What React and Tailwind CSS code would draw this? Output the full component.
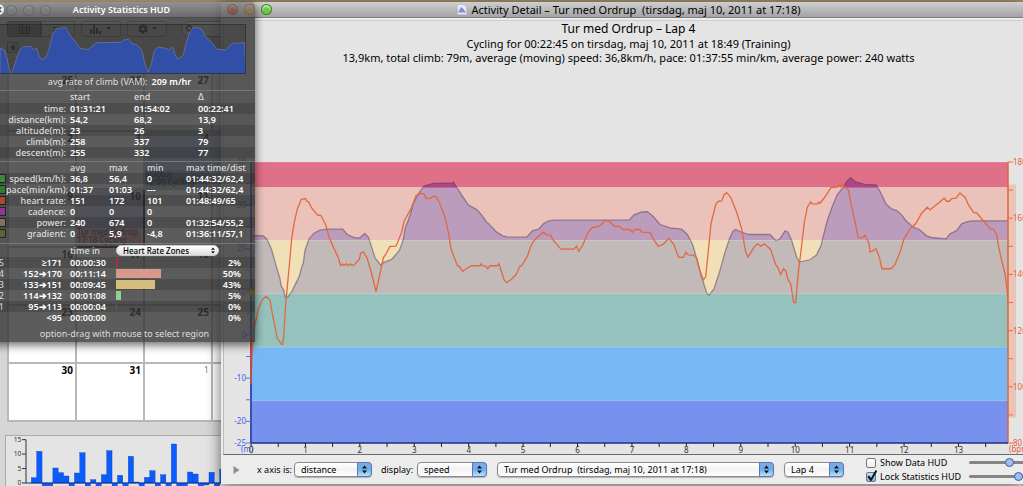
import { FaCog, FaSearch } from "react-icons/fa";

const splitRows = [
  ["time:", "01:31:21", "01:54:02", "00:22:41"],
  ["distance(km):", "54,2", "68,2", "13,9"],
  ["altitude(m):", "23", "26", "3"],
  ["climb(m):", "258", "337", "79"],
  ["descent(m):", "255", "332", "77"],
];

const metricRows = [
  { color: "bg-[#3a8a3a]", cells: ["speed(km/h):", "36,8", "56,4", "0", "01:44:32/62,4"] },
  { color: "bg-[#2f7d35]", cells: ["pace(min/km):", "01:37", "01:03", "---", "01:44:32/62,4"] },
  { color: "bg-[#ab4a2c]", cells: ["heart rate:", "151", "172", "101", "01:48:49/65"] },
  { color: "bg-[#92329a]", cells: ["cadence:", "0", "0", "0", ""] },
  { color: "bg-[#807262]", cells: ["power:", "240", "674", "0", "01:32:54/55,2"] },
  { color: "bg-[#60603a]", cells: ["gradient:", "0", "5,9", "-4,8", "01:36:11/57,1"] },
];

const zoneRows = [
  { zone: 5, range: "≥171", time: "00:00:30", pct: 2, color: "bg-[#b52a4a]" },
  { zone: 4, range: "152➔170", time: "00:11:14", pct: 50, color: "bg-[#d8988c]" },
  { zone: 3, range: "133➔151", time: "00:09:45", pct: 43, color: "bg-[#d6be80]" },
  { zone: 2, range: "114➔132", time: "00:01:08", pct: 5, color: "bg-[#94d08c]" },
  { zone: 1, range: "95➔113", time: "00:00:04", pct: 0, color: "bg-[#4c6068]" },
  { zone: "", range: "<95", time: "00:00:00", pct: 0, color: "bg-transparent" },
];

const weeks = [
  [25, 26, 27, 28],
  [2, 3, 4, 5],
  [9, 10, 11, 12],
  [16, 17, 18, 19],
  [23, 24, 25, 26],
  [30, 31, 1, 2],
];

// keyed by "week-day"
const events = {
  "1-2": { lines: ["Solotur", "12:00 Cycling"], className: "bg-[#8098c0]" },
  "2-1": { lines: ["Tur med Ordrup", "17:18 Cycling"], className: "bg-[#d890a0]" },
};

// Daily totals, thirds of a pixel above the zero line
const dailyBars = [
  16, 95, -12, -12, 45, 31, 21, -12, 30, 91, -12, 10, -12, 25, 97, -12, 23, -12, 80, 3, -12, 17,
  37, -12, 25, -12, 117, -12, -12, 33, 27, -12, -6, 32, -12, 41,
];

const shift = (dx, points) => points.map(([x, y]) => [x + dx, y]);
const toPath = (points) => "M" + points.map(([x, y]) => `${x} ${y}`).join("L");

const altitude = [
  ...shift(-33, [
    [33, 255], [70, 256], [80, 265], [87, 279], [95, 298], [108, 345], [120, 385], [124, 408],
    [131, 418], [135, 440], [143, 441], [155, 425], [163, 408], [178, 378], [185, 350], [190, 338],
    [195, 300], [207, 266], [222, 248], [240, 239], [262, 236], [300, 236], [307, 235], [322, 252],
    [345, 262], [360, 262], [374, 249], [385, 260], [395, 290], [405, 322], [415, 335], [422, 344],
    [432, 336], [455, 327], [478, 300], [490, 268], [495, 235], [510, 195], [520, 158], [538, 125],
    [552, 106], [580, 98], [637, 97], [640, 94], [655, 118], [668, 138], [685, 163], [712, 178],
    [726, 195], [740, 215], [748, 221],
  ]),
  ...shift(717, [
    [0, 224], [20, 245], [38, 256], [55, 260], [110, 260], [128, 240], [146, 236], [160, 220],
    [174, 212], [190, 209], [418, 208], [432, 193], [455, 184], [472, 183], [490, 198], [510, 222],
    [540, 232], [575, 236], [592, 252], [608, 282], [620, 325], [632, 370], [650, 428], [657, 435],
    [672, 415], [690, 360], [705, 305], [720, 260], [729, 243], [737, 237], [750, 243], [775, 252],
  ]),
  ...shift(1497, [
    [0, 252], [60, 252], [78, 271], [90, 265], [105, 241], [114, 245], [125, 270], [140, 320],
    [148, 335], [180, 328], [200, 313], [213, 285], [222, 248], [232, 210], [248, 165], [262, 132],
    [280, 110], [290, 92], [302, 81], [318, 94], [345, 101], [378, 103], [390, 122], [408, 160],
    [425, 175], [440, 180], [455, 193], [468, 211], [490, 230], [508, 237], [530, 256], [545, 261],
    [588, 265], [600, 250], [620, 240], [635, 220], [650, 214], [665, 211], [774, 211],
  ]),
];

const heartRate = [
  ...shift(-33, [
    [33, 700], [36, 620], [42, 540], [55, 475], [68, 447], [78, 438], [90, 450], [98, 495],
    [112, 565], [120, 575], [124, 582], [128, 583], [131, 560], [137, 460], [148, 345], [155, 265],
    [163, 215], [172, 175], [184, 146], [196, 144], [200, 152], [205, 153], [215, 172], [232, 193],
    [243, 195], [258, 225], [268, 262], [280, 290], [295, 322], [302, 345], [308, 341], [312, 346],
    [318, 340], [324, 346], [332, 341], [340, 346], [358, 327], [362, 308], [370, 304], [382, 325],
    [395, 370], [408, 424], [420, 370], [430, 322], [438, 310], [450, 288], [468, 287], [485, 245],
    [492, 213], [515, 170], [528, 135], [540, 128], [552, 130], [558, 144], [570, 143], [582, 136],
    [590, 140], [600, 160], [615, 200], [625, 245], [633, 295], [642, 320], [652, 345], [660, 350],
    [668, 363], [678, 355], [695, 346], [720, 346], [723, 340], [727, 346], [737, 347], [743, 355],
    [750, 346],
  ]),
  ...shift(717, [
    [0, 346], [22, 346], [27, 340], [42, 388], [50, 397], [65, 386], [78, 373], [90, 347],
    [95, 346], [112, 318], [122, 288], [132, 270], [148, 255], [160, 245], [170, 253], [182, 254],
    [190, 270], [213, 296], [252, 296], [260, 287], [266, 303], [278, 285], [292, 250], [305, 232],
    [328, 227], [345, 211], [355, 211], [375, 228], [388, 228], [400, 237], [420, 237], [427, 246],
    [433, 237], [450, 237], [456, 245], [480, 246], [490, 265], [505, 288], [520, 281], [537, 263],
    [552, 283], [566, 321], [580, 321], [588, 305], [594, 313], [610, 314], [620, 322], [630, 362],
    [640, 388], [647, 380], [653, 320], [663, 220], [677, 162], [685, 152], [695, 151], [702, 133],
    [710, 126], [722, 140], [740, 185], [755, 235], [767, 305], [774, 320],
  ]),
  ...shift(1497, [
    [0, 311], [10, 293], [22, 280], [33, 287], [43, 280], [62, 297], [77, 343], [83, 350],
    [92, 372], [101, 355], [108, 363], [114, 388], [122, 400], [131, 457], [137, 457], [145, 365],
    [155, 285], [163, 215], [172, 170], [182, 154], [187, 160], [203, 160], [206, 155], [210, 158],
    [222, 143], [243, 111], [262, 109], [268, 105], [272, 109], [278, 102], [285, 110], [295, 117],
    [302, 155], [313, 205], [325, 262], [337, 262], [345, 254], [357, 278], [360, 304], [368, 301],
    [378, 295], [388, 320], [396, 355], [423, 355], [435, 343], [450, 305], [462, 265], [480, 235],
    [497, 220], [515, 188], [532, 170], [540, 178], [560, 162], [583, 143], [590, 152], [598, 152],
    [605, 144], [618, 143], [630, 127], [635, 132], [645, 140], [655, 162], [672, 187], [680, 187],
    [702, 213], [722, 236], [730, 236], [740, 252], [745, 285], [755, 330], [765, 370], [772, 425],
    [774, 457],
  ]),
];

const hudProfile = [
  [0, 145], [14, 150], [22, 180], [30, 215], [36, 219], [45, 190], [58, 152], [72, 140], [92, 139],
  [102, 150], [110, 145], [118, 168], [126, 180], [138, 172], [148, 148], [158, 102], [172, 84],
  [198, 83], [210, 105], [222, 118], [240, 145], [265, 149], [290, 128], [365, 127], [372, 120],
  [388, 118], [398, 130], [415, 137], [427, 150], [436, 190], [446, 216], [455, 195], [465, 152],
  [475, 141], [500, 145], [510, 151], [520, 140], [528, 165], [536, 178], [552, 165], [562, 125],
  [572, 95], [583, 81], [606, 86], [620, 112], [635, 125], [655, 148], [680, 150], [700, 130],
  [736, 128],
];

// y edges of each heart rate zone, its own colour and the colour under the altitude area
const bands = [
  { from: 34, to: 111, base: "#e06f88", area: "#b24586" },
  { from: 111, to: 270, base: "#eac2ba", area: "#bb9cbc" },
  { from: 270, to: 430, base: "#f1dfb8", area: "#c2b9b9" },
  { from: 430, to: 591, base: "#b4dcb4", area: "#95c2bc" },
  { from: 591, to: 752, base: "#78b7f6", area: "#78b7f6" },
  { from: 752, to: 879, base: "#7890ee", area: "#7890ee" },
];

const TOP = 34;
const HEIGHT = 845;
const MAX_KM = 13.91;

function Chart() {
  const areaPath = `${toPath(altitude)}V879H0Z`;
  return (
    <svg className="block w-full h-full overflow-visible text-[8px]">
      <defs>
        <linearGradient id="area" gradientUnits="userSpaceOnUse" x1="0" x2="0" y1="34" y2="879">
          {bands.flatMap((b) => [
            <stop key={b.from} offset={(b.from - TOP) / HEIGHT} stopColor={b.area} />,
            <stop key={b.to + "e"} offset={(b.to - TOP) / HEIGHT} stopColor={b.area} />,
          ])}
        </linearGradient>
      </defs>
      <svg width="100%" height="100%" viewBox="0 34 2271 845" preserveAspectRatio="none">
        {bands.map((b) => (
          <rect key={b.from} y={b.from} width="2271" height={b.to - b.from} fill={b.base} />
        ))}
        <path d={areaPath} fill="url(#area)" />
        <path d={toPath(altitude)} fill="none" stroke="#503c5c" strokeOpacity="0.5" strokeWidth="1.3" vectorEffect="non-scaling-stroke" />
        {bands.map((b) => (
          <path key={b.from} d={`M0 ${b.from}H2271`} stroke="#fff" strokeOpacity="0.2" vectorEffect="non-scaling-stroke" />
        ))}
        <path d={toPath(heartRate)} fill="none" stroke="#e2683f" strokeWidth="1.3" vectorEffect="non-scaling-stroke" />
      </svg>

      {/* altitude axis */}
      <line x1="0" x2="0" y1="0" y2="100%" stroke="#3a4fb4" strokeWidth="2" />
      <line x1="0" x2="0" y1="62%" y2="79%" stroke="#b0504c" strokeWidth="2" />
      {Array.from({ length: 14 }, (_, i) => 40 - i * 5).map((m) => {
        const y = `${((40 - m) / 65) * 100}%`;
        return (
          <g key={m}>
            <line x1="-5" x2="0" y1={y} y2={y} stroke="#5a6fe8" />
            {(m % 10 === 0 || m === -25) && (
              <text x="-5" y={y} dy="3" textAnchor="end" fill="#4a60e8">{m}</text>
            )}
          </g>
        );
      })}
      <text x="-10" y="100%" dy="9" fill="#4a60e8">(m)</text>
      <circle cx="0" cy="46%" r="4" fill="#c8c020" />

      {/* heart rate axis */}
      <rect x="100%" y="8%" width="8" height="83%" fill="#e9c5b5" />
      <line x1="100%" x2="100%" y1="0" y2="100%" stroke="#e4603c" strokeWidth="1.5" />
      {Array.from({ length: 11 }, (_, i) => 180 - i * 10).map((bpm) => (
        <svg key={bpm} x="100%" y={`${180 - bpm}%`} className="overflow-visible">
          <line x1="0" x2="5" y1="0" y2="0" stroke="#ee6a44" />
          {bpm % 20 === 0 && <text x="5" y="3" fill="#ee5a3a">{bpm}</text>}
        </svg>
      ))}
      <svg x="100%" y="100%" className="overflow-visible">
        <text x="1" y="9" fill="#ee5a3a">(bpm)</text>
      </svg>

      {/* distance axis */}
      <line x1="0" x2="100%" y1="100%" y2="100%" stroke="#20307c" strokeWidth="1.5" />
      {Array.from({ length: 28 }, (_, i) => i / 2).map((km) => (
        <svg key={km} x={`${(km / MAX_KM) * 100}%`} y="100%" className="overflow-visible">
          <line x1="0" x2="0" y1="0" y2="4" stroke="#222" />
          {km % 1 === 0 && <text x="0" y="10" textAnchor="middle" fill="#333">{km}</text>}
        </svg>
      ))}
    </svg>
  );
}

function Light({ color }) {
  return <button aria-label="window control" className={`size-[11px] rounded-full border border-black/40 shadow-[inset_0_2px_2px_rgba(255,255,255,0.6)] ${color}`} />;
}

function AquaSelect({ label, options, className }) {
  return (
    <span className={`relative block h-[15px] shrink-0 ${className}`}>
      <select aria-label={label} className="block w-full h-full appearance-none rounded-[4px] border border-[#8a8a8a] bg-linear-to-b from-white via-[#f2f2f2] to-white pl-1.5 pr-4 text-[9px] leading-[13px] text-black shadow-[0_1px_1px_rgba(0,0,0,0.25)]">
        {options.map((o) => (
          <option key={o}>{o}</option>
        ))}
      </select>
      <span className="pointer-events-none absolute inset-y-0 right-0 w-[15px] rounded-r-[4px] border border-[#5a78b4] bg-linear-to-b from-[#7fa9e4] via-[#70ace8] to-[#b8e4fc] flex items-center justify-center">
        <svg width="5" height="9" viewBox="0 0 5 9" fill="#111">
          <path d="M0 3.5L2.5 0.5L5 3.5ZM0 5.5L2.5 8.5L5 5.5Z" />
        </svg>
      </span>
    </span>
  );
}

function HudOption({ label, checked, value }) {
  return (
    <div className="flex items-center h-[14px]">
      <label className="flex items-center gap-1 w-[103px] whitespace-nowrap">
        <span className="relative block size-[10px]">
          <input type="checkbox" defaultChecked={checked} className="peer block size-[10px] appearance-none rounded-[2px] border border-[#777] bg-linear-to-b from-white to-[#eee] checked:from-[#c4ddf8] checked:to-[#7fb4ee]" />
          <svg viewBox="0 0 10 10" className="pointer-events-none absolute -top-0.5 left-0 hidden size-[11px] peer-checked:block" fill="none" stroke="#111" strokeWidth="1.8">
            <path d="M2 5.5L4.5 9L9.5 0.5" />
          </svg>
        </span>
        {label}
      </label>
      <input
        type="range"
        aria-label={`${label} opacity`}
        defaultValue={value}
        className="w-[60px] h-2 appearance-none bg-transparent [&::-webkit-slider-runnable-track]:h-[3px] [&::-webkit-slider-runnable-track]:rounded-full [&::-webkit-slider-runnable-track]:bg-[#858585] [&::-webkit-slider-thumb]:appearance-none [&::-webkit-slider-thumb]:-mt-[3px] [&::-webkit-slider-thumb]:size-[9px] [&::-webkit-slider-thumb]:rounded-full [&::-webkit-slider-thumb]:border [&::-webkit-slider-thumb]:border-[#3c5a98] [&::-webkit-slider-thumb]:bg-[#9cc0f0]"
      />
    </div>
  );
}

function DetailWindow() {
  return (
    <section className="absolute left-[221px] right-0 top-0.5 bottom-0.5 flex flex-col overflow-hidden bg-[#ececec] shadow-[0_2px_14px_rgba(0,0,0,0.6)]">
      <header className="relative flex h-4 shrink-0 items-center justify-center gap-1 border-b border-[#7c7c7c] bg-linear-to-b from-[#cfcfcf] to-[#a4a4a4] pl-3.5">
        <div className="absolute left-1.5 top-0.5 flex gap-1.5">
          <Light color="bg-[#e8382c]" />
          <Light color="bg-[#f4a028]" />
          <Light color="bg-[#6cc840]" />
        </div>
        <svg width="10" height="11" viewBox="0 0 10 11">
          <path d="M0.5 0.5H7L9.5 3V10.5H0.5Z" fill="#e6eaf6" stroke="#c0c4d0" />
          <path d="M1 8.5L4 3L6 4.5L9 8.5Z" fill="#8090d8" />
        </svg>
        <h1 className="text-[11px] leading-4 whitespace-pre">Activity Detail – Tur med Ordrup  (tirsdag, maj 10, 2011 at 17:18)</h1>
      </header>

      <div className="ml-0.5 mt-0.5 flex min-h-0 flex-1 flex-col border-b border-l border-b-[#6c6c6c] border-l-[#bbb] border-t border-t-[#cfcfcf] bg-[#e4e4e4]">
        <div className="flex flex-col items-center whitespace-nowrap pl-2.5">
          <h2 className="text-[12px] leading-4">Tur med Ordrup – Lap 4</h2>
          <p className="text-[11px] leading-[14px]">Cycling for 00:22:45 on tirsdag, maj 10, 2011 at 18:49 (Training)</p>
          <p className="text-[11px] leading-[14px]">13,9km, total climb: 79m, average (moving) speed: 36,8km/h, pace: 01:37:55 min/km, average power: 240 watts</p>
        </div>
        <div className="ml-[27px] mr-[15px] mt-[97px] mb-[11px] min-h-0 flex-1">
          <Chart />
        </div>
      </div>

      <footer className="flex h-[29px] shrink-0 items-center text-[9px] whitespace-nowrap">
        <button aria-label="play" className="ml-3 mr-[17px] shrink-0">
          <svg width="7" height="8" viewBox="0 0 7 8" fill="#8c8c8c">
            <path d="M0.5 0L6.5 4L0.5 8Z" />
          </svg>
        </button>
        <span className="w-[37px] shrink-0">x axis is:</span>
        <AquaSelect label="x axis" options={["distance", "time"]} className="w-[78px]" />
        <span className="ml-[9px] w-9 shrink-0">display:</span>
        <AquaSelect label="display" options={["speed", "heart rate"]} className="w-[70px]" />
        <AquaSelect label="activity" options={["Tur med Ordrup\u00a0 (tirsdag, maj 10, 2011 at 17:18)"]} className="ml-2.5 w-[277px]" />
        <AquaSelect label="lap" options={["Lap 4"]} className="ml-2.5 w-[60px]" />
        <div className="ml-[22px] shrink-0">
          <HudOption label="Show Data HUD" value={71} />
          <HudOption label="Lock Statistics HUD" checked value={88} />
        </div>
      </footer>
    </section>
  );
}

function CalendarWindow() {
  return (
    <section className="absolute inset-x-0 top-0.5 bottom-0 overflow-hidden bg-[#d6d6d6]">
      <div className="flex h-4 items-center gap-1.5 bg-linear-to-b from-[#cfcfcf] to-[#a4a4a4] pl-1.5">
        <Light color="bg-[#bbb]" />
        <Light color="bg-[#bbb]" />
        <Light color="bg-[#bbb]" />
      </div>
      <div className="flex h-6 items-start gap-1.5 pl-[7px] pt-[3px] text-[#222]">
        <div className="flex h-4 w-[68px]">
          <button aria-label="month" className="flex w-1/2 items-center justify-center rounded-l-[3px] border border-[#555] bg-[#888]">
            <svg width="11" height="10" viewBox="0 0 11 10" fill="none" stroke="#222">
              <path d="M0.5 0.5H10.5V9.5H0.5ZM0.5 3.5H10.5M0.5 6.5H10.5M3.5 0.5V9.5M7.5 0.5V9.5" />
            </svg>
          </button>
          <button aria-label="list" className="flex w-1/2 items-center justify-center border border-[#888] bg-[#ddd]">
            <svg width="11" height="10" viewBox="0 0 11 10" stroke="#222">
              <path d="M0 0.5H11M0 3.5H11M0 6.5H11M0 9.5H11" />
            </svg>
          </button>
        </div>
        <button aria-label="charts" className="flex h-4 w-10 items-center justify-center rounded-[3px] border border-[#888] bg-[#ddd]">
          <svg width="22" height="10" viewBox="0 0 22 10" fill="#222">
            <path d="M0 5H2V10H0ZM3 0H5V10H3ZM6 4H8V10H6ZM9 7H11V10H9ZM16 3H21L18.5 6Z" />
          </svg>
        </button>
        <button aria-label="actions" className="flex h-4 w-10 items-center justify-center gap-1 rounded-[3px] border border-[#888] bg-[#ddd]">
          <FaCog className="size-2.5" />
          <svg width="5" height="4" viewBox="0 0 5 4" fill="#222">
            <path d="M0 0H5L2.5 3Z" />
          </svg>
        </button>
        <div className="ml-2 flex h-4 w-20 items-center rounded-full border border-[#777] bg-white pl-1">
          <FaSearch className="size-2" />
        </div>
      </div>
      <div className="h-4 pl-[7px]">
        <button aria-label="previous month" className="flex size-[11px] items-center justify-center border border-[#777] bg-[#ccc]">
          <svg width="5" height="7" viewBox="0 0 5 7" fill="#111">
            <path d="M4.5 0V7L0.5 3.5Z" />
          </svg>
        </button>
      </div>

      <table className="ml-[7px] table-fixed border-collapse bg-white text-[10px] leading-3 font-bold">
        <thead>
          <tr className="h-[15px] bg-[#d0d0d0] font-normal text-[#445]">
            {["m", "t", "o", "t"].map((d, i) => (
              <th key={i} className="w-[68px] min-w-[68px] text-[9px] font-normal">{d}</th>
            ))}
          </tr>
        </thead>
        <tbody>
          {weeks.map((week, w) => (
            <tr key={w} className="h-[58px]">
              {week.map((day, d) => {
                const today = w === 2 && d === 1;
                const nextMonth = w === 5 && d > 1;
                const event = events[`${w}-${d}`];
                return (
                  <td
                    key={d}
                    className={`border-2 p-0 pr-0.5 align-top text-right ${today ? "border-black bg-[#b4c4e4]" : "border-[#b8b8b8]"} ${nextMonth ? "text-[9px] font-normal text-[#888]" : ""} ${d >= 2 && w === 1 ? "bg-[#a8bcdc]" : ""}`}
                  >
                    {day}
                    {event && (
                      <div className={`mt-[26px] text-left text-[8px] leading-2 font-normal ${event.className}`}>
                        {event.lines[0]}
                        <br />
                        {event.lines[1]}
                      </div>
                    )}
                  </td>
                );
              })}
            </tr>
          ))}
        </tbody>
      </table>

      <div className="ml-[5px] mt-[13px] h-[60px] border border-[#aaa] bg-[#e4e4e4]">
        <svg width="240" height="60" viewBox="0 0 720 180" className="block text-[20px]">
          {[15, 10, 5, 0].map((v, i) => (
            <g key={v}>
              <path d={`M48 ${11 + i * 43.3}H60`} stroke="#333" strokeWidth="3" />
              <text x="46" y={18 + i * 43.3} textAnchor="end" fill="#333">{v}</text>
            </g>
          ))}
          <path d="M60 11V141" stroke="#333" strokeWidth="3" />
          {dailyBars.map((h, i) => (
            <rect key={i} x={76 + i * 16.15} y={h > 0 ? 141 - h : 141} width="16" height={Math.abs(h)} fill="#0a5cff" stroke="#0a3a98" strokeWidth="1" />
          ))}
          <path d="M60 141H720" stroke="#0a2c80" strokeWidth="3" />
        </svg>
      </div>
    </section>
  );
}

function StatisticsHud() {
  return (
    <section className="absolute -left-4 top-0.5 w-[271px] overflow-hidden rounded-t-[4px] text-[9px] text-[#ddd] shadow-[0_3px_10px_rgba(0,0,0,0.6)]">
      <header className="relative flex h-[15px] items-center justify-center bg-linear-to-b from-[#787878]/70 to-[#585858]/75 pl-1 text-[9px] font-semibold text-white">
        <button aria-label="close" className="absolute left-[9px] top-0.5 size-[11px] rounded-full bg-[#eee] text-[9px] leading-[10px] text-[#444]">✕</button>
        <h2>Activity Statistics HUD</h2>
      </header>
      <div className="bg-[#383838]/82">
        <svg viewBox="0 72 741 150" preserveAspectRatio="none" className="ml-4 block h-[57px] w-[247px] border-t-[7px] border-r border-transparent bg-black/15 bg-clip-padding">
          <path d={`${toPath(hudProfile)}L741 222H0Z`} fill="#324fa8" stroke="#76809c" strokeWidth="2" />
          <path d="M0 73H740V221H0" fill="none" stroke="#303030" strokeWidth="3" />
        </svg>
        <p className="flex h-4 items-center justify-center gap-1">
          avg rate of climb (VAM): <b className="font-semibold text-white">209 m/hr</b>
        </p>

        <table className="w-full table-fixed border-t border-[#777] leading-[11px]">
          <thead>
            <tr className="h-3 text-left">
              <th className="w-[82px] p-0" />
              <th className="w-16 p-0 pl-1 font-medium">start</th>
              <th className="w-16 p-0 pl-1 font-medium">end</th>
              <th className="p-0 pl-1 font-medium">Δ</th>
            </tr>
          </thead>
          <tbody>
            {splitRows.map(([label, ...cells]) => (
              <tr key={label} className="h-[11px] odd:bg-black/15">
                <th className="p-0 text-right font-medium">{label}</th>
                {cells.map((c, i) => (
                  <td key={i} className="p-0 pl-1 font-semibold text-white">{c}</td>
                ))}
              </tr>
            ))}
          </tbody>
        </table>

        <table className="mt-[3px] w-full table-fixed border-t border-[#777] leading-[11px]">
          <thead>
            <tr className="h-3 text-left">
              <th className="w-[22px] p-0" />
              <th className="w-[60px] p-0" />
              <th className="w-[39px] p-0 pl-1 font-medium">avg</th>
              <th className="w-[38px] p-0 pl-1 font-medium">max</th>
              <th className="w-[39px] p-0 pl-1 font-medium">min</th>
              <th className="p-0 pl-1 font-medium">max time/dist</th>
            </tr>
          </thead>
          <tbody>
            {metricRows.map(({ color, cells: [label, ...cells] }) => (
              <tr key={label} className="h-[11px] odd:bg-black/15">
                <td className="p-0">
                  <div className={`h-[9px] border border-[#222] ${color}`} />
                </td>
                <th className="whitespace-nowrap p-0 text-right font-medium">{label}</th>
                {cells.map((c, i) => (
                  <td key={i} className="p-0 pl-1 font-semibold whitespace-nowrap text-white">{c}</td>
                ))}
              </tr>
            ))}
          </tbody>
        </table>

        <table className="mt-1 w-full table-fixed border-t border-[#777] leading-[11px]">
          <colgroup>
            <col className="w-5" />
            <col className="w-[58px]" />
            <col className="w-[54px]" />
            <col className="w-[90px]" />
            <col />
          </colgroup>
          <thead>
            <tr className="h-[13px] text-left">
              <th className="p-0" />
              <th className="p-0" />
              <th className="p-0 pl-2 font-medium">time in</th>
              <th colSpan={2} className="p-0">
                <span className="relative block h-[11px] w-[103px]">
                  <select aria-label="zones" className="block h-[11px] w-full appearance-none rounded-full border border-[#ccc] bg-linear-to-b from-white to-[#ddd] pl-1.5 text-[8px] leading-[9px] font-medium text-black">
                    <option>Heart Rate Zones</option>
                  </select>
                  <svg width="4" height="7" viewBox="0 0 5 9" fill="#111" className="pointer-events-none absolute right-1 top-0.5">
                    <path d="M0 3.5L2.5 0.5L5 3.5ZM0 5.5L2.5 8.5L5 5.5Z" />
                  </svg>
                </span>
              </th>
            </tr>
          </thead>
          <tbody>
            {zoneRows.map((row) => (
              <tr key={row.range} className="h-[11px] odd:bg-black/15">
                <td className="p-0 text-right">{row.zone}</td>
                <th className="p-0 text-right font-semibold text-white">{row.range}</th>
                <td className="p-0 pl-2 font-semibold text-white">{row.time}</td>
                <td className="p-0">
                  <div className={`h-[9px] min-w-px ${row.color}`} style={{ width: `${row.pct}%` }} />
                </td>
                <td className="p-0 pr-3.5 text-right font-semibold text-white">{row.pct}%</td>
              </tr>
            ))}
          </tbody>
        </table>
        <p className="pt-[5px] pb-0.5 pl-2.5 text-center leading-3">option-drag with mouse to select region</p>
      </div>
    </section>
  );
}

export default function App() {
  return (
    <main className="relative h-screen min-h-[400px] overflow-hidden bg-[#a89870] font-['Noto_Sans','Open_Sans',sans-serif] text-black">
      <CalendarWindow />
      <DetailWindow />
      <StatisticsHud />
    </main>
  );
}
